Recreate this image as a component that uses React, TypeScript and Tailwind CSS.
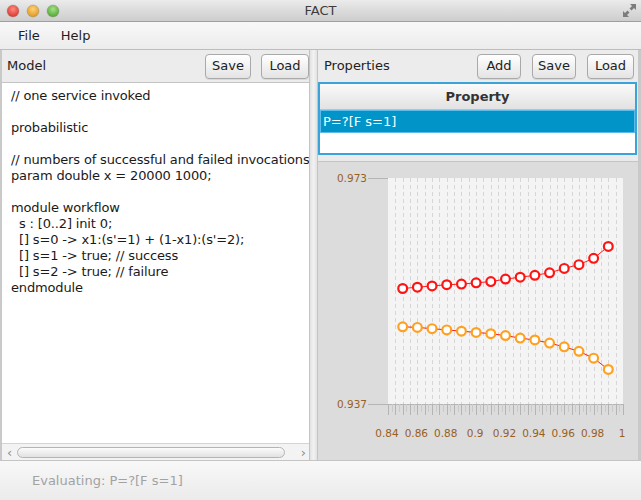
import React from 'react';

const code = [
    '// one service invoked',
    '',
    'probabilistic',
    '',
    '// numbers of successful and failed invocations',
    'param double x = 20000 1000;',
    '',
    'module workflow',
    '  s : [0..2] init 0;',
    "  [] s=0 -> x1:(s'=1) + (1-x1):(s'=2);",
    '  [] s=1 -> true; // success',
    '  [] s=2 -> true; // failure',
    'endmodule',
];

// success / failure probability for x in 0.85..0.99
const red = [0.9554, 0.9556, 0.9558, 0.956, 0.9561, 0.9563, 0.9565, 0.9569, 0.9572, 0.9575, 0.9579, 0.9586, 0.9592, 0.9602, 0.9621];
const orange = [0.9493, 0.9492, 0.949, 0.9488, 0.9486, 0.9484, 0.9482, 0.9479, 0.9475, 0.9472, 0.9467, 0.9461, 0.9454, 0.9443, 0.9425];

function Button({label, w}: {label: string; w: string}) {
    return (
        <button className={`flex h-[25px] ${w} items-center justify-center rounded-[4px] border border-[#a9a9a9] bg-gradient-to-b from-white to-[#e4e4e4] text-[13px] text-[#222] shadow-[0_1px_0_rgba(0,0,0,0.08)]`}>
            {label}
        </button>
    );
}

function TrafficLights() {
    const dots = [
        {cx: 7, a: '#ff8a80', b: '#d9342b'},
        {cx: 27, a: '#ffd27a', b: '#e0951c'},
        {cx: 47, a: '#a6e08a', b: '#4ea72e'},
    ];
    return (
        <svg width="56" height="14" viewBox="0 0 56 14">
            <defs>
                {dots.map((d, i) => (
                    <radialGradient key={i} id={`tl${i}`} cx="50%" cy="35%" r="65%">
                        <stop offset="0" stopColor={d.a}/>
                        <stop offset="1" stopColor={d.b}/>
                    </radialGradient>
                ))}
            </defs>
            {dots.map((d, i) => (
                <circle key={i} cx={d.cx} cy="7" r="6" fill={`url(#tl${i})`} stroke="#8a8a8a" strokeOpacity="0.5" strokeWidth="0.8"/>
            ))}
        </svg>
    );
}

function ResizeIcon() {
    return (
        <svg width="15" height="15" viewBox="0 0 15 15" fill="#7c7c7c">
            <path d="M14 1 L14 7 L12 5 L9.5 7.5 L7.5 5.5 L10 3 L8 1 Z"/>
            <path d="M1 14 L1 8 L3 10 L5.5 7.5 L7.5 9.5 L5 12 L7 14 Z"/>
        </svg>
    );
}

function Chart() {
    const X0 = 70, X1 = 305, Y0 = 16, Y1 = 242;
    const px = (v: number) => X0 + ((v - 0.84) / 0.16) * (X1 - X0);
    const py = (v: number) => Y0 + ((0.973 - v) / 0.036) * (Y1 - Y0);
    const xs = red.map((_, i) => 0.85 + i * 0.01);
    const grid = Array.from({length: 31}, (_, i) => 0.845 + i * 0.005);
    const ticks = Array.from({length: 65}, (_, i) => 0.84 + i * 0.0025);
    const labels = ['0.84', '0.86', '0.88', '0.9', '0.92', '0.94', '0.96', '0.98', '1'];
    const line = (ys: number[]) => ys.map((y, i) => `${i ? 'L' : 'M'}${px(xs[i]).toFixed(1)} ${py(y).toFixed(1)}`).join(' ');

    return (
        <svg width="320" height="296" viewBox="0 0 320 296" className="block">
            <rect x={X0} y={Y0} width={X1 - X0} height={Y1 - Y0} fill="#f4f4f4"/>
            {grid.map((g, i) => (
                <line key={i} x1={Math.round(px(g)) + 0.5} x2={Math.round(px(g)) + 0.5} y1={Y0} y2={Y1} stroke="#d6d6d6" strokeDasharray="4 3"/>
            ))}
            <line x1="50" x2={X0} y1={Y0 + 0.5} y2={Y0 + 0.5} stroke="#b5b5b5"/>
            <line x1="50" x2={X1} y1={Y1 + 0.5} y2={Y1 + 0.5} stroke="#b5b5b5"/>
            {ticks.map((t, i) => (
                <line key={i} x1={Math.round(px(t)) + 0.5} x2={Math.round(px(t)) + 0.5} y1={Y1} y2={Y1 + (i % 2 === 0 ? 11 : 8)}
                      stroke={i % 2 === 0 ? '#b4b4b4' : '#cacaca'}/>
            ))}
            <g fontFamily="'DejaVu Sans', sans-serif" fontSize="10.5" fill="#97601f">
                <text x="49" y={Y0 + 4} textAnchor="end">0.973</text>
                <text x="49" y={Y1 + 4} textAnchor="end">0.937</text>
                {labels.map((l, i) => (
                    <text key={l} x={X0 - 1 + i * ((X1 - X0) / 8)} y="275" textAnchor="middle">{l}</text>
                ))}
            </g>
            <path d={line(red)} fill="none" stroke="#ff1a1a" strokeWidth="1"/>
            <path d={line(orange)} fill="none" stroke="#ff1a1a" strokeWidth="1"/>
            {red.map((y, i) => (
                <circle key={`r${i}`} cx={px(xs[i])} cy={py(y)} r="4.4" fill="white" stroke="#ff1414" strokeWidth="2.2"/>
            ))}
            {orange.map((y, i) => (
                <circle key={`o${i}`} cx={px(xs[i])} cy={py(y)} r="4.4" fill="white" stroke="#ffa01e" strokeWidth="2.2"/>
            ))}
        </svg>
    );
}

export default function App() {
    return (
        <div className="flex h-[500px] w-[641px] flex-col overflow-hidden bg-[#e9e9e9] font-['DejaVu_Sans',sans-serif] text-[#222]">
            {/* title bar */}
            <div className="flex h-[22px] shrink-0 items-center border-b border-[#9e9e9e] bg-gradient-to-b from-[#ebebeb] to-[#cdcdcd]">
                <div className="flex w-[90px] pl-[6px]">
                    <TrafficLights/>
                </div>
                <div className="flex-1 text-center text-[13px] text-[#3c3c3c]">FACT</div>
                <div className="flex w-[90px] justify-end pr-[4px]">
                    <ResizeIcon/>
                </div>
            </div>

            {/* menu */}
            <div className="flex h-[28px] shrink-0 items-center gap-[21px] border-b border-[#bdbdbd] bg-gradient-to-b from-[#f8f8f8] to-[#ececec] pl-[18px] text-[13px] text-[#1e1e1e]">
                <span>File</span>
                <span>Help</span>
            </div>

            {/* panes */}
            <div className="flex h-[410px] shrink-0 border-l-2 border-r-[3px] border-[#c9c9c9]">
                {/* model */}
                <div className="flex w-[307px] flex-col">
                    <div className="flex h-[32px] shrink-0 items-center justify-between bg-[#ececec] pl-[5px]">
                        <span className="text-[13px]">Model</span>
                        <div className="flex gap-[10px]">
                            <Button label="Save" w="w-[46px]"/>
                            <Button label="Load" w="w-[48px]"/>
                        </div>
                    </div>
                    <div className="flex-1 overflow-hidden border-t border-[#c4c4c4] bg-white pl-[9px] pt-[5px]">
                        {code.map((l, i) => (
                            <div key={i} className="h-[16px] whitespace-pre text-[13px] leading-[16px] tracking-[-0.15px] text-[#1a1a1a]">
                                {l}
                            </div>
                        ))}
                    </div>
                    <div className="flex h-[17px] shrink-0 items-center border-t border-[#d4d4d4] bg-[#f3f3f3] text-[13px] text-[#8c8c8c]">
                        <span className="w-[15px] pl-[5px] leading-none">‹</span>
                        <div className="h-[11px] w-[268px] rounded-full border border-[#b4b4b4] bg-gradient-to-b from-[#fbfbfb] to-[#e2e2e2]"/>
                        <span className="flex-1 pr-[3px] text-right leading-none">›</span>
                    </div>
                </div>

                {/* divider */}
                <div className="flex w-[9px] shrink-0 border-x border-[#c4c4c4] bg-gradient-to-r from-[#e2e2e2] via-[#f2f2f2] to-[#e2e2e2]"/>

                {/* properties */}
                <div className="flex flex-1 flex-col">
                    <div className="flex h-[32px] shrink-0 items-center justify-between bg-[#ececec] pl-[6px] pr-[4px]">
                        <span className="text-[13px]">Properties</span>
                        <div className="flex gap-[11px]">
                            <Button label="Add" w="w-[44px]"/>
                            <Button label="Save" w="w-[44px]"/>
                            <Button label="Load" w="w-[47px]"/>
                        </div>
                    </div>
                    <div className="mr-[1px] flex flex-col border-2 border-[#3aa3da] bg-white">
                        <div className="flex h-[26px] items-center justify-center border-b border-[#c2c2c2] bg-gradient-to-b from-[#fafafa] to-[#e2e2e2] text-[13px] font-bold text-[#333]">
                            Property
                        </div>
                        <div className="flex h-[23px] items-center border border-[#5cbbe8] bg-[#0094c9] pl-[2px] text-[13px] text-white">
                            P=?[F s=1]
                        </div>
                        <div className="h-[20px]"/>
                    </div>
                    <div className="h-[7px] shrink-0 border-b border-[#c4c4c4] bg-[#ebebeb]"/>
                    <div className="flex-1 bg-[#dcdcdc]">
                        <Chart/>
                    </div>
                </div>
            </div>

            {/* status */}
            <div className="flex flex-1 items-center border-t border-[#c4c4c4] bg-gradient-to-b from-[#f8f8f8] to-[#ebebeb] pl-[32px] text-[13px] text-[#a2a2a2]">
                Evaluating: P=?[F s=1]
            </div>
        </div>
    );
}
